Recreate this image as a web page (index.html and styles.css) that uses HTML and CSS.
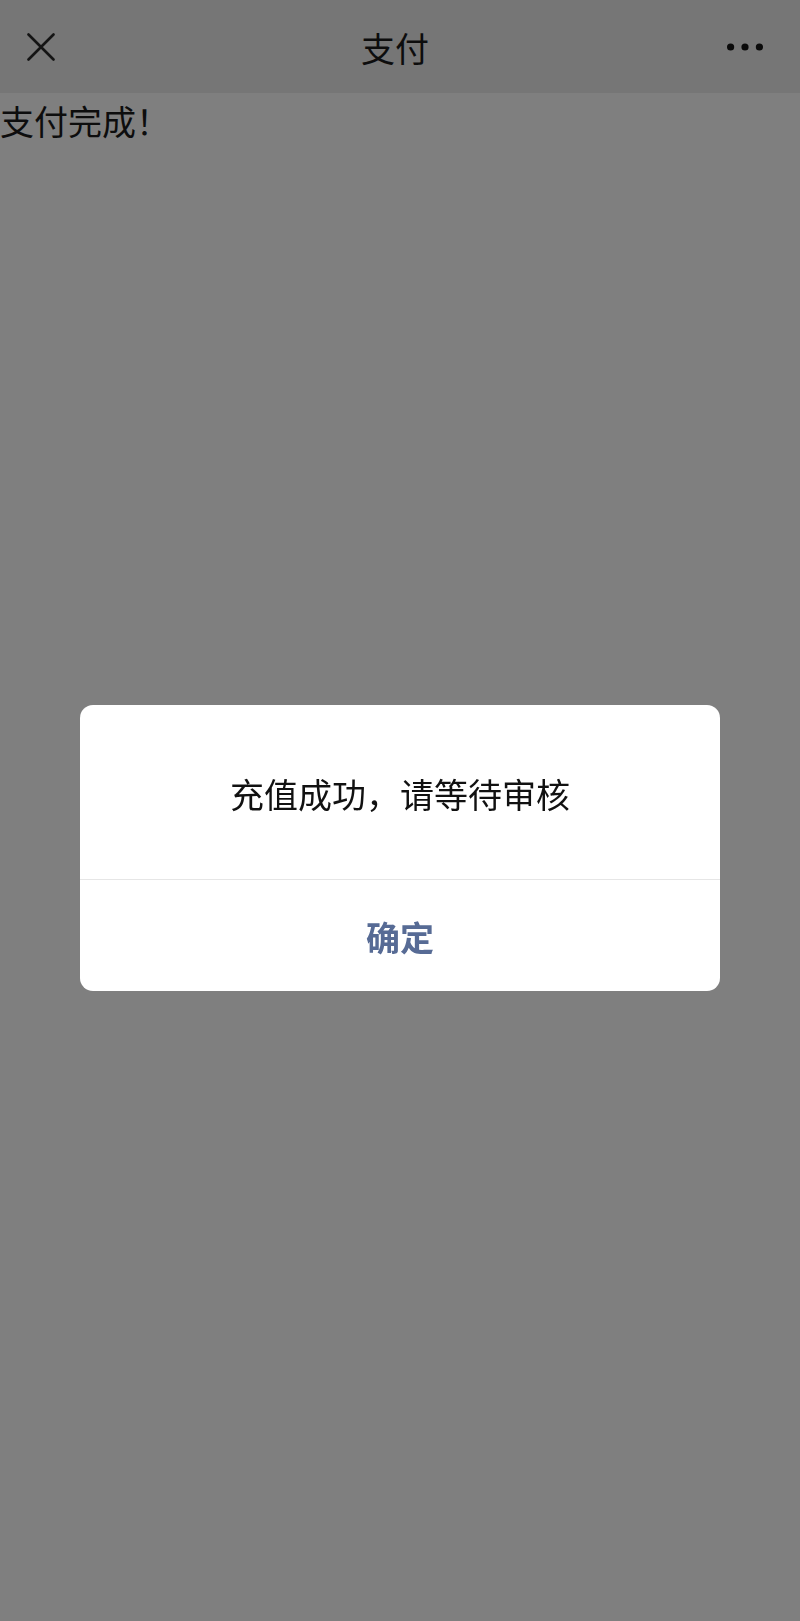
FILE: index.html
```html
<!DOCTYPE html>
<html lang="zh-CN">
<head>
<meta charset="utf-8">
<title>支付</title>
<link rel="stylesheet" href="styles.css">
</head>
<body>
<header class="navbar">
  <div class="nav-left">
    <svg class="icon-close" width="28" height="28" viewBox="0 0 28 28" aria-hidden="true">
      <path d="M1.5 1.5 L26.5 26.5 M26.5 1.5 L1.5 26.5" stroke="#141414" stroke-width="2.6" stroke-linecap="round" fill="none"/>
    </svg>
  </div>
  <div class="nav-title">支付</div>
  <div class="nav-right">
    <svg class="icon-more" width="36" height="8" viewBox="0 0 36 8" aria-hidden="true">
      <circle cx="3.6" cy="4" r="3.6" fill="#0a0a0a"/>
      <circle cx="18" cy="4" r="3.6" fill="#0a0a0a"/>
      <circle cx="32.4" cy="4" r="3.6" fill="#0a0a0a"/>
    </svg>
  </div>
</header>
<main class="content">
  <p class="status">支付完成！</p>
</main>
<div class="mask">
  <div class="dialog">
    <div class="dialog-body">充值成功，请等待审核</div>
    <div class="dialog-footer">
      <span class="dialog-btn">确定</span>
    </div>
  </div>
</div>
</body>
</html>
```
FILE: styles.css
```css
html, body {
  margin: 0;
  padding: 0;
}

body {
  background: #7f7f7f;
  font-family: "Noto Sans CJK SC", "Noto Sans", sans-serif;
  color: #111;
  min-height: 1621px;
}

.navbar {
  height: 93px;
  background: #767676;
  display: grid;
  grid-template-columns: 1fr auto 1fr;
  align-items: center;
}

.nav-left {
  padding-left: 27px;
  display: flex;
  align-items: center;
}

.icon-close {
  display: block;
  margin-top: 1px;
}

.nav-title {
  font-size: 34px;
  line-height: 34px;
  font-weight: 400;
  color: #0d0d0d;
  margin-right: 10px;
  margin-top: 3px;
}

.nav-right {
  display: flex;
  justify-content: flex-end;
  padding-right: 37px;
}

.icon-more {
  display: block;
}

.content {
  padding-top: 11px;
}

.status {
  margin: 0;
  font-size: 34px;
  line-height: 34px;
  color: #0d0d0d;
}

.mask {
  position: fixed;
  inset: 0;
  display: flex;
  flex-direction: column;
  align-items: center;
  padding-top: 705px;
  box-sizing: border-box;
}

.dialog {
  width: 640px;
  background: #fff;
  border-radius: 13px;
  overflow: hidden;
}

.dialog-body {
  height: 174px;
  display: flex;
  align-items: center;
  justify-content: center;
  font-size: 34px;
  line-height: 34px;
  color: #111;
  padding-top: 3px;
  box-sizing: border-box;
}

.dialog-footer {
  height: 112px;
  border-top: 1px solid #e6e6e6;
  box-sizing: border-box;
  display: flex;
  align-items: center;
  justify-content: center;
}

.dialog-btn {
  font-size: 34px;
  line-height: 34px;
  font-weight: 600;
  color: #576b95;
  margin-top: 3px;
}
```
